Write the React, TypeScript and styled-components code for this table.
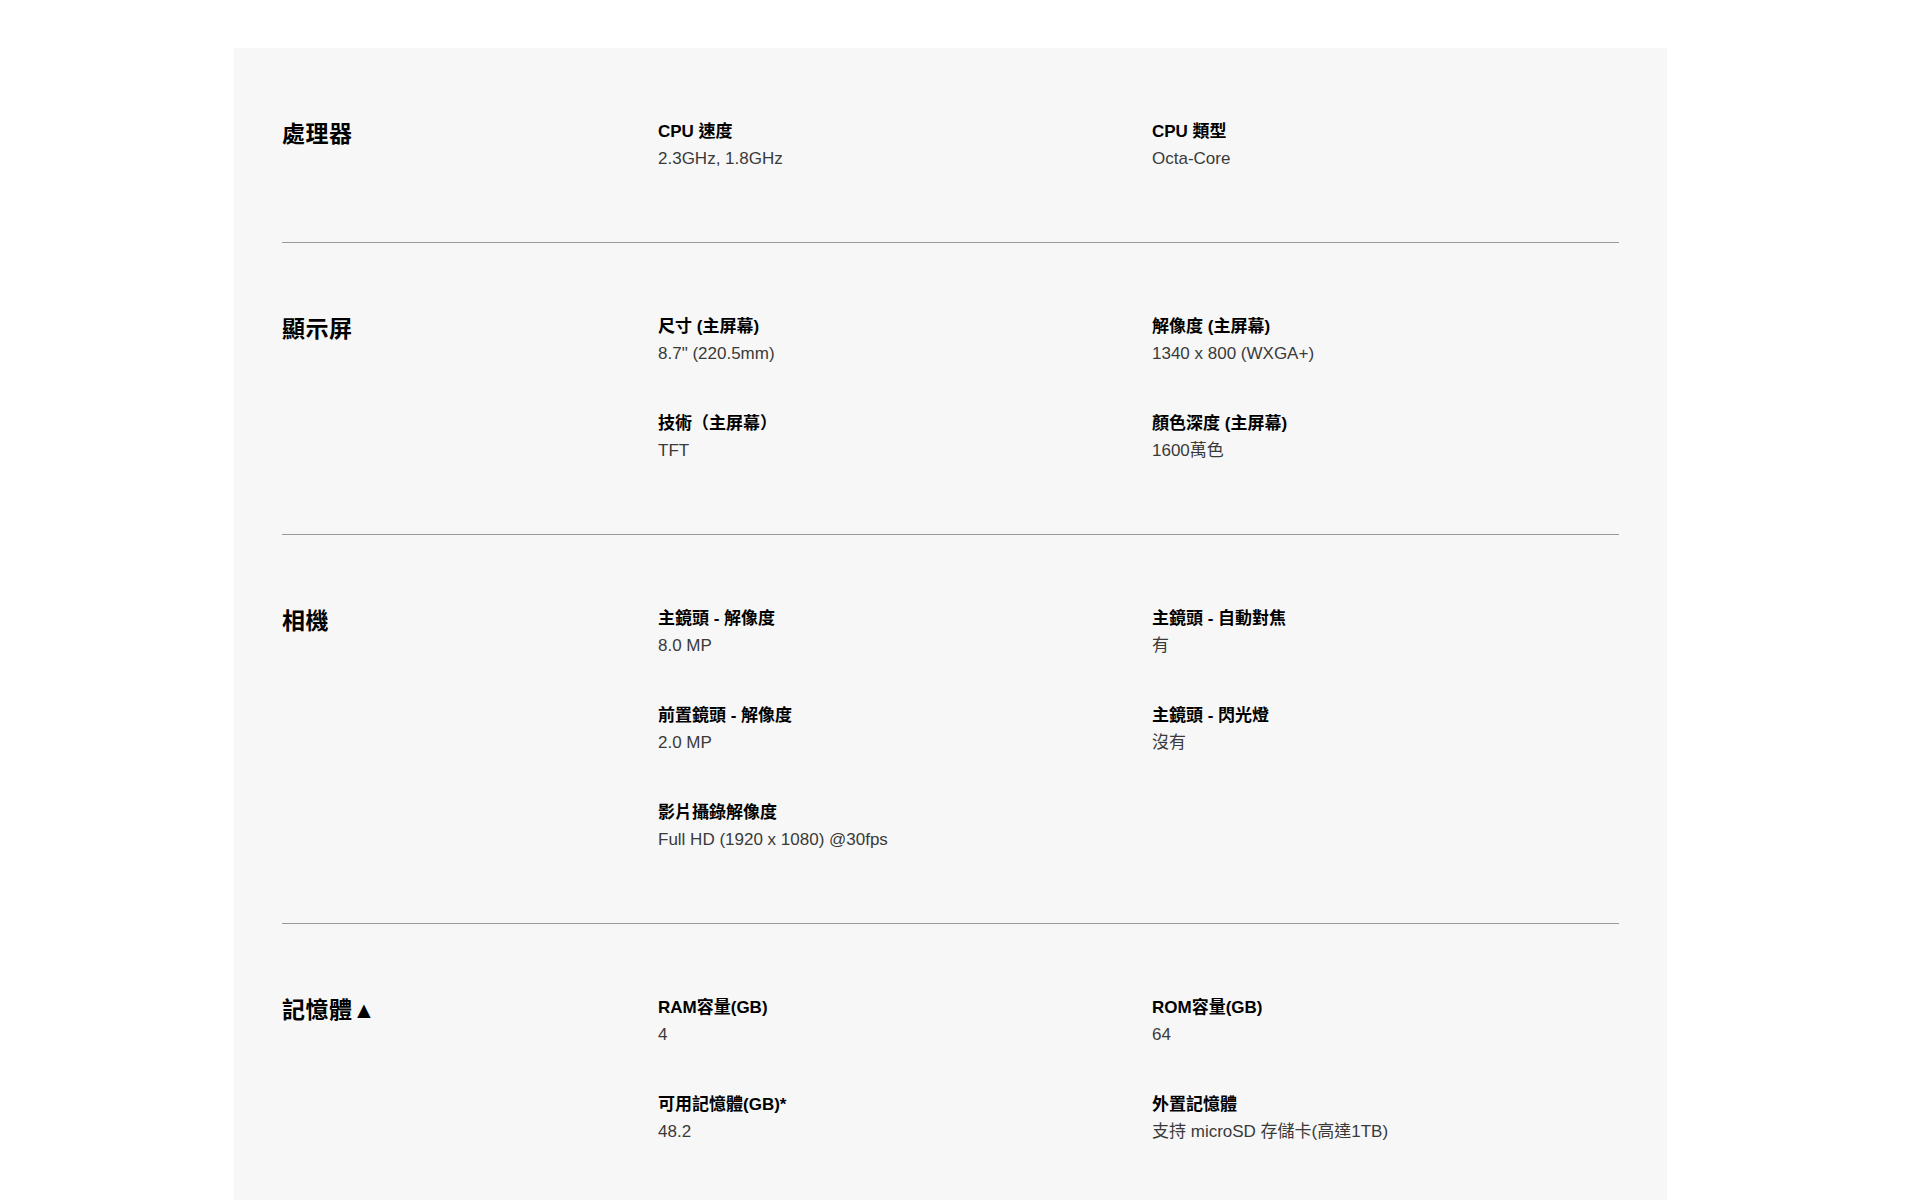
import styled, { createGlobalStyle } from "styled-components";

interface ISpec {
  label: string;
  value: string;
}

interface ISection {
  title: string;
  specs: ISpec[];
}

const sections: ISection[] = [
  {
    title: "處理器",
    specs: [
      { label: "CPU 速度", value: "2.3GHz, 1.8GHz" },
      { label: "CPU 類型", value: "Octa-Core" },
    ],
  },
  {
    title: "顯示屏",
    specs: [
      { label: "尺寸 (主屏幕)", value: '8.7" (220.5mm)' },
      { label: "解像度 (主屏幕)", value: "1340 x 800 (WXGA+)" },
      { label: "技術（主屏幕）", value: "TFT" },
      { label: "顏色深度 (主屏幕)", value: "1600萬色" },
    ],
  },
  {
    title: "相機",
    specs: [
      { label: "主鏡頭 - 解像度", value: "8.0 MP" },
      { label: "主鏡頭 - 自動對焦", value: "有" },
      { label: "前置鏡頭 - 解像度", value: "2.0 MP" },
      { label: "主鏡頭 - 閃光燈", value: "沒有" },
      { label: "影片攝錄解像度", value: "Full HD (1920 x 1080) @30fps" },
    ],
  },
  {
    title: "記憶體▲",
    specs: [
      { label: "RAM容量(GB)", value: "4" },
      { label: "ROM容量(GB)", value: "64" },
      { label: "可用記憶體(GB)*", value: "48.2" },
      { label: "外置記憶體", value: "支持 microSD 存儲卡(高達1TB)" },
    ],
  },
];

const GlobalStyle = createGlobalStyle`
  html, body {
    margin: 0;
    padding: 0;
    background: #ffffff;
  }
  body {
    font-family: "Liberation Sans", "Noto Sans CJK TC", sans-serif;
    color: #000;
  }
`;

const Page = styled.div`
  padding-top: 48px;
  min-height: 1200px;
  box-sizing: border-box;
`;

const Panel = styled.div`
  margin-left: 234px;
  width: 1433px;
  min-height: 1152px;
  background: #f7f7f7;
  padding: 0 48px;
  box-sizing: border-box;
`;

const Section = styled.section<{ $last?: boolean }>`
  display: grid;
  grid-template-columns: 376px 494px 1fr;
  padding: 70px 0;
  border-bottom: ${({ $last }) => ($last ? "none" : "1px solid #9a9a9a")};
`;

const Title = styled.h3`
  grid-row: 1 / span 10;
  margin: 0;
  font-family: "Liberation Sans", "Noto Sans CJK TC", sans-serif;
  font-size: 23px;
  line-height: 32px;
  font-weight: 700;
  color: #000;
  letter-spacing: 0.5px;
`;

const SpecGrid = styled.div`
  grid-column: 2 / span 2;
  display: grid;
  grid-template-columns: 494px 1fr;
  row-gap: 43px;
`;

const Spec = styled.div`
  display: flex;
  flex-direction: column;
`;

const SpecLabel = styled.span`
  font-size: 17px;
  line-height: 27px;
  font-weight: 700;
  color: #000;
  text-spacing-trim: space-all;
`;

const SpecValue = styled.span`
  font-size: 17px;
  line-height: 27px;
  color: #3a3a3a;
`;

export default function App() {
  return (
    <Page>
      <GlobalStyle />
      <Panel>
        {sections.map((section, i) => (
          <Section key={section.title} $last={i === sections.length - 1}>
            <Title>{section.title}</Title>
            <SpecGrid>
              {section.specs.map((spec) => (
                <Spec key={spec.label}>
                  <SpecLabel>{spec.label}</SpecLabel>
                  <SpecValue>{spec.value}</SpecValue>
                </Spec>
              ))}
            </SpecGrid>
          </Section>
        ))}
      </Panel>
    </Page>
  );
}
